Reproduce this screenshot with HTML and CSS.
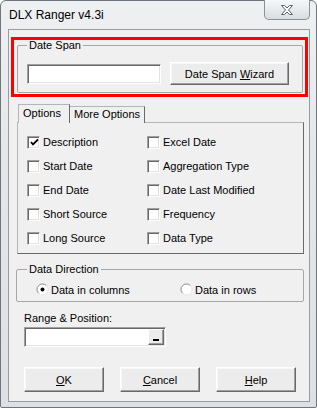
FILE: index.html
```html
<!DOCTYPE html>
<html lang="en">
<head>
    <meta charset="UTF-8">
    <title>DLX Ranger v4.3i</title>
    <link rel="stylesheet" href="styles.css">
</head>
<body>
    <div class="window">
        <div class="titlebar">
            <span class="title">DLX Ranger v4.3i</span>
            <div class="close-btn">
                <svg width="12" height="10" viewBox="0 0 12 10">
                    <polygon points="0.5,0.5 3.5,0.5 6,3 8.5,0.5 11.5,0.5 7.5,5 11.5,9.5 8.5,9.5 6,7 3.5,9.5 0.5,9.5 4.5,5" fill="#fbfbfb" stroke="#5d636a" stroke-width="1" stroke-linejoin="round"/>
                </svg>
            </div>
        </div>

        <div class="client">
            <div class="highlight">
                <fieldset class="group date-span">
                    <legend>Date Span</legend>
                    <div class="span-row">
                        <div class="field span-input"></div>
                        <div class="btn wizard-btn"><span>Date Span <u>W</u>izard</span></div>
                    </div>
                </fieldset>
            </div>

            <div class="tabs">
                <div class="tab active">Options</div>
                <div class="tab">More Options</div>
            </div>
            <div class="tab-panel">
                <div class="check"><span class="box"><svg width="9" height="9" viewBox="0 0 9 9"><polyline points="1,4 3,6.5 8,1.5" fill="none" stroke="#000" stroke-width="1.8"/></svg></span>Description</div>
                <div class="check"><span class="box"></span>Excel Date</div>
                <div class="check"><span class="box"></span>Start Date</div>
                <div class="check"><span class="box"></span>Aggregation Type</div>
                <div class="check"><span class="box"></span>End Date</div>
                <div class="check"><span class="box"></span>Date Last Modified</div>
                <div class="check"><span class="box"></span>Short Source</div>
                <div class="check"><span class="box"></span>Frequency</div>
                <div class="check"><span class="box"></span>Long Source</div>
                <div class="check"><span class="box"></span>Data Type</div>
            </div>

            <fieldset class="group direction">
                <legend>Data Direction</legend>
                <div class="radio-row">
                    <div class="radio">
                        <svg width="13" height="13" viewBox="0 0 13 13">
                            <circle cx="6.5" cy="6.5" r="5.5" fill="#fff"/>
                            <path d="M2.6 10.4 A5.5 5.5 0 0 1 10.4 2.6" fill="none" stroke="#8a8a8a" stroke-width="1"/>
                            <path d="M10.4 2.6 A5.5 5.5 0 0 1 2.6 10.4" fill="none" stroke="#e6e6e6" stroke-width="1"/>
                            <circle cx="6.5" cy="6.5" r="2" fill="#000"/>
                        </svg>
                        Data in columns
                    </div>
                    <div class="radio">
                        <svg width="13" height="13" viewBox="0 0 13 13">
                            <circle cx="6.5" cy="6.5" r="5.5" fill="#fff"/>
                            <path d="M2.6 10.4 A5.5 5.5 0 0 1 10.4 2.6" fill="none" stroke="#8a8a8a" stroke-width="1"/>
                            <path d="M10.4 2.6 A5.5 5.5 0 0 1 2.6 10.4" fill="none" stroke="#e6e6e6" stroke-width="1"/>
                        </svg>
                        Data in rows
                    </div>
                </div>
            </fieldset>

            <div class="range-label">Range &amp; Position:</div>
            <div class="field range-field">
                <div class="picker"><span class="dash"></span></div>
            </div>

            <div class="actions">
                <div class="btn action-btn"><span><u>O</u>K</span></div>
                <div class="btn action-btn"><span><u>C</u>ancel</span></div>
                <div class="btn action-btn"><span><u>H</u>elp</span></div>
            </div>
        </div>
    </div>
</body>
</html>
```

FILE: styles.css
```css
body {
    margin: 0;
    font-family: "Liberation Sans", Arial, sans-serif;
    font-size: 11px;
    color: #000000;
    background-color: #ffffff;
}

.window {
    width: 317px;
    height: 408px;
    box-sizing: border-box;
    display: flex;
    flex-direction: column;
    padding: 0 6px 5px 7px;
    border: 1px solid #6f757c;
    border-radius: 6px 6px 2px 2px;
    background: linear-gradient(180deg, #eef0f2 0%, #e4e7ea 40%, #dde1e5 100%);
}

.titlebar {
    height: 28px;
    display: flex;
    justify-content: space-between;
    align-items: flex-start;
}
.title {
    align-self: center;
    font-size: 12px;
    padding-left: 1px;
}
.close-btn {
    width: 46px;
    height: 20px;
    margin-top: -1px;
    box-sizing: border-box;
    display: flex;
    justify-content: center;
    align-items: center;
    border: 1px solid #8a9097;
    border-top: none;
    border-radius: 0 0 5px 5px;
    background: linear-gradient(180deg, #f6f7f8 0%, #e6e9ec 55%, #d9dde1 100%);
}

.client {
    flex: 1;
    width: 302px;
    box-sizing: border-box;
    border: 1px solid #979ca2;
    background-color: #f0f0f0;
    padding: 0;
}

.highlight {
    width: 297px;
    box-sizing: border-box;
    margin: 7px 0 0 2px;
    padding: 0 2px 1px 3px;
    border: 3px solid #ff0000;
}

.group {
    margin: 0;
    border: 1px solid #a7a7a7;
    border-radius: 2px;
    min-width: 0;
}
.group legend {
    padding: 0 2px;
    line-height: 11px;
}

.date-span {
    padding: 11px 0 7px 9px;
}
.span-row {
    display: flex;
    align-items: center;
    gap: 9px;
}

.field {
    box-sizing: border-box;
    height: 20px;
    background-color: #ffffff;
    border: 1px solid;
    border-color: #a0a0a0 #ffffff #ffffff #a0a0a0;
    box-shadow: inset 1px 1px #696969, inset -1px -1px #e3e3e3;
}
.span-input {
    width: 134px;
}

.btn {
    box-sizing: border-box;
    display: flex;
    justify-content: center;
    align-items: center;
    white-space: nowrap;
    background-color: #ececec;
    border: 1px solid;
    border-color: #ffffff #696969 #696969 #ffffff;
    box-shadow: inset -1px -1px #a0a0a0, inset 1px 1px #f8f8f8;
}
.wizard-btn {
    width: 119px;
    height: 23px;
    padding-top: 1px;
}

.tabs {
    display: flex;
    align-items: flex-end;
    margin: 7px 0 -1px 9px;
    position: relative;
    z-index: 1;
}
.tab {
    box-sizing: border-box;
    height: 17px;
    padding: 1px 0 0 3px;
    line-height: 13px;
    white-space: nowrap;
    border: 1px solid;
    border-color: #b5b5b5 #696969 transparent #b5b5b5;
    border-bottom: none;
    background-color: #f0f0f0;
}
.tab.active {
    height: 19px;
    width: 52px;
    padding: 2px 0 0 4px;
}
.tab.active + .tab {
    border-left: none;
    width: 75px;
    padding-left: 4px;
}

.tab-panel {
    width: 287px;
    box-sizing: border-box;
    margin-left: 8px;
    padding: 7px 0 3px 9px;
    border: 1px solid;
    border-color: #b5b5b5 #696969 #696969 #b5b5b5;
    display: grid;
    grid-template-columns: 120px 1fr;
    grid-auto-rows: 24px;
}
.check {
    display: flex;
    align-items: center;
    gap: 3px;
}
.box {
    width: 13px;
    height: 13px;
    box-sizing: border-box;
    display: flex;
    justify-content: center;
    align-items: center;
    background-color: #ffffff;
    border: 1px solid;
    border-color: #a0a0a0 #ffffff #ffffff #a0a0a0;
    box-shadow: inset 1px 1px #696969, inset -1px -1px #e3e3e3;
}
.box svg {
    margin: 1px 0 0 1px;
}

.direction {
    width: 288px;
    box-sizing: border-box;
    margin: 10px 0 0 7px;
    padding: 8px 0 5px 10px;
}
.radio-row {
    display: grid;
    grid-template-columns: 144px 1fr;
    margin-left: 9px;
    height: 13px;
}
.radio {
    display: flex;
    align-items: center;
    gap: 2px;
}

.range-label {
    margin: 10px 0 0 15px;
    line-height: 13px;
}
.range-field {
    width: 142px;
    margin: 2px 0 0 15px;
    padding: 1px;
    display: flex;
    justify-content: flex-end;
}
.picker {
    width: 16px;
    height: 16px;
    box-sizing: border-box;
    display: flex;
    justify-content: center;
    align-items: flex-end;
    padding-bottom: 3px;
    background-color: #ececec;
    border: 1px solid;
    border-color: #ffffff #696969 #696969 #ffffff;
    box-shadow: inset -1px -1px #a0a0a0;
}
.dash {
    width: 6px;
    height: 2px;
    background-color: #000000;
}

.actions {
    display: flex;
    gap: 16px;
    margin: 20px 0 0 15px;
}
.action-btn {
    width: 80px;
    height: 25px;
}
```
